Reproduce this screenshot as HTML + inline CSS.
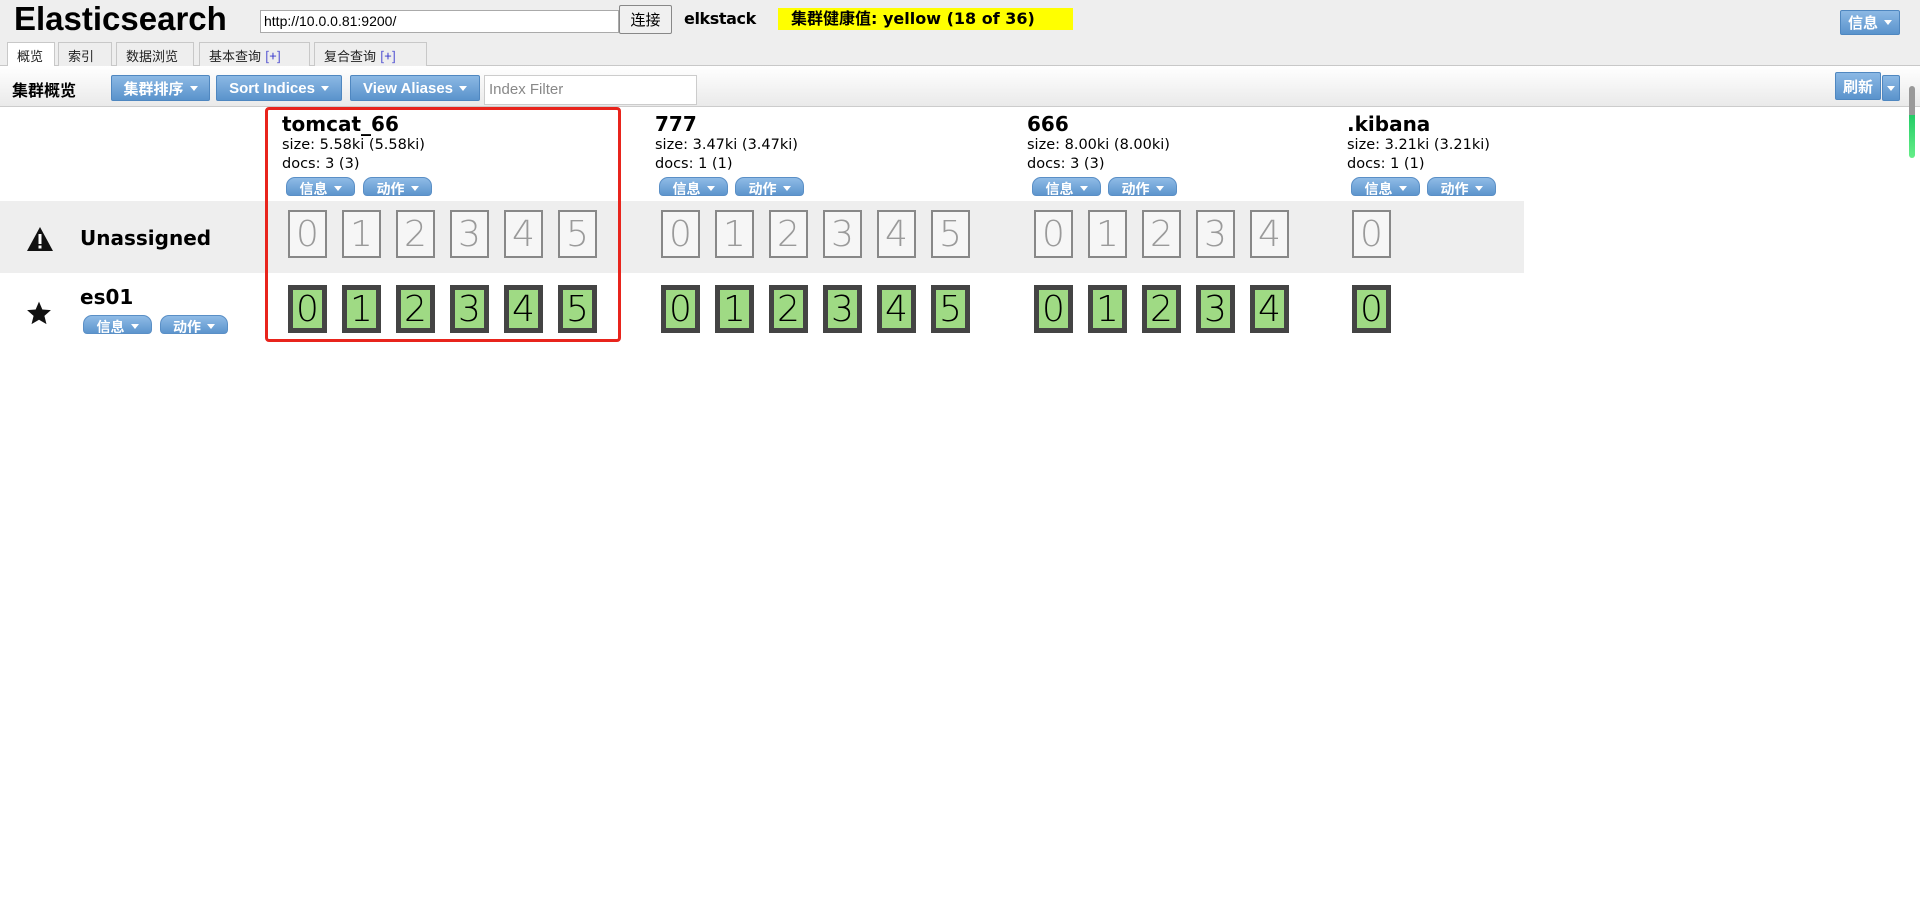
<!DOCTYPE html>
<html><head><meta charset="utf-8"><style>
*{box-sizing:border-box;margin:0;padding:0}
body{width:1920px;height:915px;overflow:hidden;background:#fff;font-family:"DejaVu Sans","Noto Sans CJK SC",sans-serif;color:#000;position:relative}
.abs{position:absolute}
.hdr{left:0;top:0;width:1920px;height:66px;background:#eee;border-bottom:1px solid #c8c8c8}
.tb{left:0;top:66px;width:1920px;height:41px;background:linear-gradient(#fff,#eaeaea);border-bottom:1px solid #ccc}
.btn{background:linear-gradient(#8bb8e4,#5a93cc);border:1px solid #4f87c0;color:#fff;font-weight:bold;font-size:15px;font-family:"Liberation Sans","Noto Sans CJK SC",sans-serif;display:flex;align-items:center;justify-content:center;border-radius:2px}
.caret{display:inline-block;width:0;height:0;border-left:4px solid transparent;border-right:4px solid transparent;border-top:5px solid #fff;margin-left:6px}
.pill{background:linear-gradient(#8fbbe6,#5d95cd);border:1px solid #5a8fc6;color:#fff;font-weight:bold;font-size:14px;border-radius:9px 9px 4px 4px;height:19px;display:flex;align-items:flex-start;justify-content:center;font-family:"Noto Sans CJK SC",sans-serif;overflow:hidden;line-height:22px}
.pill .caret{margin-top:8px}
.tab{top:42px;height:25px;border:1px solid #c8c8c8;border-bottom:none;background:#eee;font-size:13px;font-family:"Noto Sans CJK SC",sans-serif;display:flex;align-items:center;padding-left:9px;color:#222}
.tab b{color:#33c;font-weight:normal;margin-left:4px}
.sh{width:39px;height:48px;font-size:36px;display:flex;align-items:center;justify-content:center;font-family:"DejaVu Sans",sans-serif;font-weight:300}
.un{border:2px solid #888;color:#9a9a9a;background:#f6f6f6}
.ok{border:5px solid #444;background:#9fda84;color:#000}
.iname{font-weight:bold;font-size:20px;line-height:24px}
.isz{font-size:14.5px;line-height:19px}
</style></head><body>
<div class="abs hdr"></div>
<div class="abs" style="left:14px;top:0px;font-family:'Liberation Sans',sans-serif;font-weight:bold;font-size:33px">Elasticsearch</div>
<div class="abs" style="left:260px;top:10px;width:359px;height:23px;background:#fff;border:1px solid #aaa;font-family:'Liberation Sans',sans-serif;font-size:14px;padding:2px 3px">http://10.0.0.81:9200/</div>
<div class="abs" style="left:619px;top:5px;width:53px;height:29px;background:#f0f0f0;border:1px solid #888;border-radius:2px;font-family:'Noto Sans CJK SC',sans-serif;font-size:15px;display:flex;align-items:center;justify-content:center">连接</div>
<div class="abs" style="left:684px;top:9px;font-weight:bold;font-size:16px;font-family:'DejaVu Sans',sans-serif;letter-spacing:-0.4px">elkstack</div>
<div class="abs" style="left:778px;top:8px;width:295px;height:22px;background:#ff0;font-weight:bold;font-size:16px;font-family:'DejaVu Sans','Noto Sans CJK SC',sans-serif;padding-left:13px;line-height:22px;white-space:nowrap">集群健康值: yellow (18 of 36)</div>
<div class="abs btn" style="left:1840px;top:10px;width:60px;height:25px">信息<span class="caret"></span></div>
<div class="abs tab" style="left:7px;width:48px;background:#fff;height:26px">概览</div>
<div class="abs tab" style="left:58px;width:54px">索引</div>
<div class="abs tab" style="left:116px;width:78px">数据浏览</div>
<div class="abs tab" style="left:199px;width:111px">基本查询<b>[+]</b></div>
<div class="abs tab" style="left:314px;width:113px">复合查询<b>[+]</b></div>
<div class="abs tb"></div>
<div class="abs" style="left:12px;top:77px;font-weight:bold;font-size:16px;font-family:'Noto Sans CJK SC',sans-serif">集群概览</div>
<div class="abs btn" style="left:111px;top:75px;width:99px;height:26px">集群排序<span class="caret"></span></div>
<div class="abs btn" style="left:216px;top:75px;width:126px;height:26px">Sort Indices<span class="caret"></span></div>
<div class="abs btn" style="left:350px;top:75px;width:130px;height:26px">View Aliases<span class="caret"></span></div>
<div class="abs" style="left:484px;top:75px;width:213px;height:30px;background:#fff;border:1px solid #ccc;color:#888;font-family:'Liberation Sans',sans-serif;font-size:15px;padding:5px 4px">Index Filter</div>
<div class="abs btn" style="left:1835px;top:72px;width:46px;height:28px">刷新</div>
<div class="abs btn" style="left:1882px;top:75px;width:18px;height:26px"><span class="caret" style="margin:0"></span></div>
<div class="abs" style="left:1909px;top:86px;width:6px;height:72px;border-radius:3px;background:linear-gradient(#999 0,#999 40%,#2c6 40%,#6e8 100%)"></div>

<div class="abs" style="left:0;top:201px;width:1524px;height:72px;background:#eee"></div>
<svg class="abs" style="left:26px;top:226px" width="28" height="26" viewBox="0 0 28 26"><path d="M14 1 L27 25 H1 Z" fill="#111"/><rect x="12.5" y="8" width="3" height="10" fill="#fff"/><rect x="12.5" y="19.5" width="3" height="3" fill="#fff"/></svg>
<div class="abs" style="left:80px;top:226px;font-weight:bold;font-size:20px">Unassigned</div>
<svg class="abs" style="left:26px;top:300px" width="26" height="26" viewBox="0 0 24 24"><path d="M12 1.5l3.1 7.3 7.9.6-6 5.2 1.9 7.7L12 18.2l-6.9 4.1L7 14.6 1 9.4l7.9-.6z" fill="#111"/></svg>
<div class="abs" style="left:80px;top:285px;font-weight:bold;font-size:20px">es01</div>
<div class="abs pill" style="left:83px;top:315px;width:69px">信息<span class="caret"></span></div>
<div class="abs pill" style="left:160px;top:315px;width:68px">动作<span class="caret"></span></div>

<div class="abs" style="left:265px;top:107px;width:356px;height:235px;border:3px solid #e8241c;border-radius:4px"></div>

<div class="abs" style="left:282px;top:112px"><div class="iname">tomcat_66</div><div class="isz">size: 5.58ki (5.58ki)<br>docs: 3 (3)</div></div>
<div class="abs" style="left:655px;top:112px"><div class="iname">777</div><div class="isz">size: 3.47ki (3.47ki)<br>docs: 1 (1)</div></div>
<div class="abs" style="left:1027px;top:112px"><div class="iname">666</div><div class="isz">size: 8.00ki (8.00ki)<br>docs: 3 (3)</div></div>
<div class="abs" style="left:1347px;top:112px"><div class="iname">.kibana</div><div class="isz">size: 3.21ki (3.21ki)<br>docs: 1 (1)</div></div>

<div class="abs pill" style="left:286px;top:177px;width:69px">信息<span class="caret"></span></div><div class="abs pill" style="left:363px;top:177px;width:69px">动作<span class="caret"></span></div>
<div class="abs pill" style="left:659px;top:177px;width:69px">信息<span class="caret"></span></div><div class="abs pill" style="left:735px;top:177px;width:69px">动作<span class="caret"></span></div>
<div class="abs pill" style="left:1032px;top:177px;width:69px">信息<span class="caret"></span></div><div class="abs pill" style="left:1108px;top:177px;width:69px">动作<span class="caret"></span></div>
<div class="abs pill" style="left:1351px;top:177px;width:69px">信息<span class="caret"></span></div><div class="abs pill" style="left:1427px;top:177px;width:69px">动作<span class="caret"></span></div>

<div id="sh"></div>
<script>
var cols=[[288,6],[661,6],[1034,5],[1352,1]],h='';
cols.forEach(function(c){for(var i=0;i<c[1];i++){var x=c[0]+i*54;
h+='<div class="abs sh un" style="left:'+x+'px;top:210px">'+i+'</div>';
h+='<div class="abs sh ok" style="left:'+x+'px;top:285px">'+i+'</div>';}});
document.getElementById('sh').innerHTML=h;
</script>
</body></html>
